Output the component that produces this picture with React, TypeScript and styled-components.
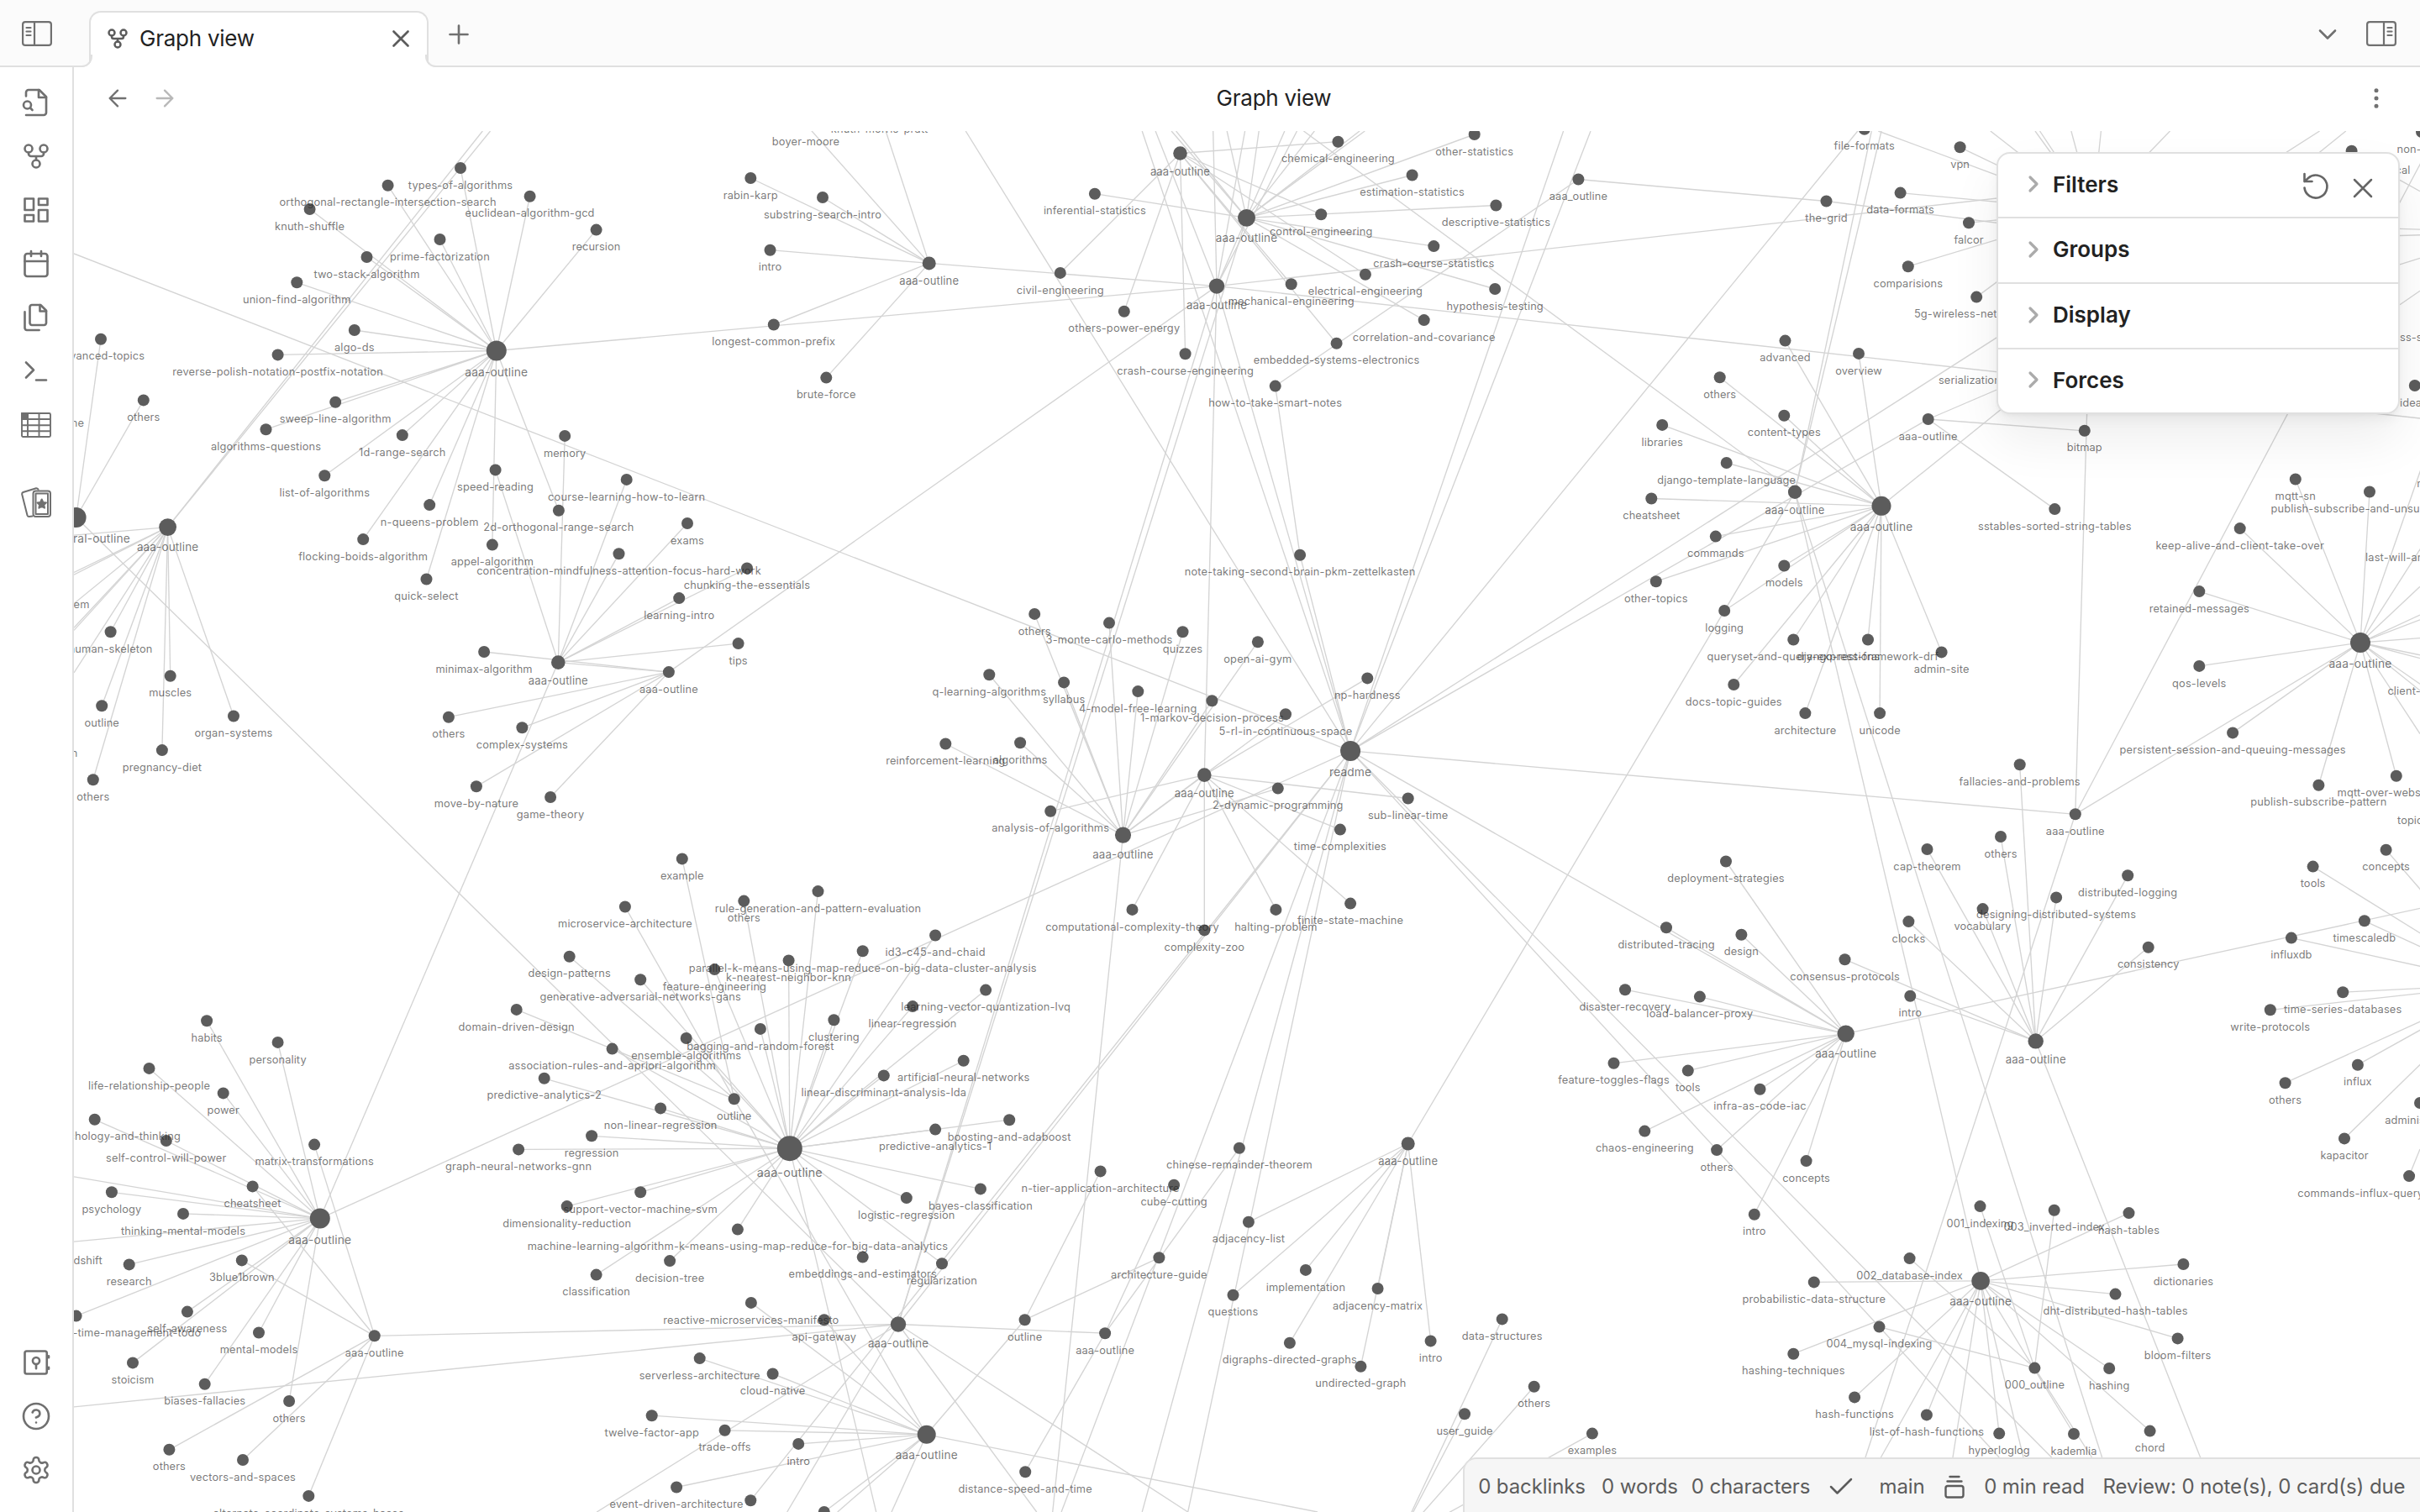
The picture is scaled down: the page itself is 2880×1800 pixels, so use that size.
import React from "react";
import styled, { createGlobalStyle } from "styled-components";

/* ------------------------------------------------------------------ */
/* Graph data                                                          */
/* ------------------------------------------------------------------ */

type Leaf = [x: number, y: number, label: string];
type Hub = { x: number; y: number; r: number; label: string };

const hubs: Record<string, Hub> = {
  algo: { x: 590.8, y: 417.5, r: 12, label: "aaa-outline" },
  learning: { x: 664.3, y: 788.6, r: 8.3, label: "aaa-outline" },
  game: { x: 795.9, y: 800.1, r: 7, label: "aaa-outline" },
  strings: { x: 1105.7, y: 313.4, r: 8, label: "aaa-outline" },
  engineering: { x: 1404.5, y: 182.5, r: 8.3, label: "aaa-outline" },
  stats: { x: 1483.5, y: 259.4, r: 10.4, label: "aaa-outline" },
  science: { x: 1448, y: 340.6, r: 9.2, label: "aaa-outline" },
  notes: { x: 1878.4, y: 213.5, r: 7, label: "aaa_outline" },
  net: { x: 2490.6, y: 251, r: 12, label: "" },
  formats: { x: 2294.7, y: 499, r: 7, label: "aaa-outline" },
  django: { x: 2239, y: 602.3, r: 11.5, label: "aaa-outline" },
  backend: { x: 2136.1, y: 585.8, r: 8.2, label: "aaa-outline" },
  mqtt: { x: 2809, y: 765, r: 12, label: "aaa-outline" },
  storage: { x: 2469.8, y: 969.3, r: 7, label: "aaa-outline" },
  series: { x: 2978, y: 1171.7, r: 10, label: "" },
  distributed: { x: 2422.7, y: 1239.4, r: 9.2, label: "aaa-outline" },
  devops: { x: 2196.7, y: 1230.6, r: 10.2, label: "aaa-outline" },
  hash: { x: 2357.1, y: 1524.9, r: 10.8, label: "aaa-outline" },
  indexing: { x: 2421.4, y: 1628.6, r: 7, label: "000_outline" },
  graphs: { x: 1675.7, y: 1361.5, r: 8, label: "aaa-outline" },
  puzzles: { x: 1315.1, y: 1587.2, r: 7, label: "aaa-outline" },
  arch: { x: 1219.6, y: 1571.2, r: 7, label: "outline" },
  readme: { x: 1607.1, y: 893.9, r: 12, label: "readme" },
  rl: { x: 1336.5, y: 994.1, r: 9.6, label: "aaa-outline" },
  complexity: { x: 1433.3, y: 922.6, r: 8.3, label: "aaa-outline" },
  anatomy: { x: 199.6, y: 627.6, r: 10.4, label: "aaa-outline" },
  general: { x: 90.6, y: 616, r: 12, label: "behavioural-outline" },
  psych: { x: 380.8, y: 1450.6, r: 12, label: "aaa-outline" },
  math: { x: 445.7, y: 1590.3, r: 7, label: "aaa-outline" },
  ml: { x: 939.8, y: 1367.2, r: 15, label: "aaa-outline" },
  software: { x: 873.7, y: 1308.3, r: 7, label: "outline" },
  cs: { x: 1069, y: 1576.5, r: 9.2, label: "aaa-outline" },
  micro: { x: 1102.7, y: 1707.8, r: 11, label: "aaa-outline" },
  db: { x: 1664, y: 1834, r: 9, label: "" },
};

const clusters: Record<string, Leaf[]> = {
  algo: [
    [548, 200, "types-of-algorithms"],
    [461.6, 220.8, "orthogonal-rectangle-intersection-search"],
    [368.6, 249, "knuth-shuffle"],
    [630.6, 233.8, "euclidean-algorithm-gcd"],
    [709.6, 273.6, "recursion"],
    [523.5, 285, "prime-factorization"],
    [436.5, 306, "two-stack-algorithm"],
    [353.3, 336.3, "union-find-algorithm"],
    [421.8, 393, "algo-ds"],
    [330.6, 422.4, "reverse-polish-notation-postfix-notation"],
    [399.2, 478.7, "sweep-line-algorithm"],
    [316.5, 511.2, "algorithms-questions"],
    [478.8, 518.1, "1d-range-search"],
    [386.3, 566.3, "list-of-algorithms"],
    [511.2, 601.1, "n-queens-problem"],
    [432.2, 642.1, "flocking-boids-algorithm"],
    [585.9, 648.6, "appel-algorithm"],
    [664.9, 607.7, "2d-orthogonal-range-search"],
    [507.5, 689.5, "quick-select"],
  ],
  learning: [
    [589.6, 559.4, "speed-reading"],
    [672.2, 518.9, "memory"],
    [745.7, 570.9, "course-learning-how-to-learn"],
    [736.5, 659.3, "concentration-mindfulness-attention-focus-hard-work"],
    [818, 623, "exams"],
    [889, 676.5, "chunking-the-essentials"],
    [808.2, 712.1, "learning-intro"],
    [878.6, 766.1, "tips"],
  ],
  game: [
    [576.1, 776, "minimax-algorithm"],
    [533.9, 853.7, "others"],
    [621.4, 866.3, "complex-systems"],
    [566.9, 936.3, "move-by-nature"],
    [655.1, 949, "game-theory"],
  ],
  strings: [
    [893.3, 212, "rabin-karp"],
    [916.5, 297.7, "intro"],
    [920.8, 386.5, "longest-common-prefix"],
    [979, 235, "substring-search-intro"],
    [983.3, 449.6, "brute-force"],
    [959, 148, "boyer-moore"],
    [1046.6, 133, "knuth-morris-pratt"],
  ],
  engineering: [
    [1592.4, 168.7, "chemical-engineering"],
    [1261.8, 324.9, "civil-engineering"],
    [1337.8, 370.8, "others-power-energy"],
    [1410.6, 421.3, "crash-course-engineering"],
    [1572.2, 255.2, "control-engineering"],
    [1624.9, 326.8, "electrical-engineering"],
    [1536.7, 338.3, "mechanical-engineering"],
    [1590.6, 408.7, "embedded-systems-electronics"],
  ],
  stats: [
    [1302.9, 230.7, "inferential-statistics"],
    [1680.6, 208.5, "estimation-statistics"],
    [1754.7, 160, "other-statistics"],
    [1780.4, 244.5, "descriptive-statistics"],
    [1706.3, 293.1, "crash-course-statistics"],
    [1779.2, 344, "hypothesis-testing"],
    [1694.7, 381.1, "correlation-and-covariance"],
  ],
  notes: [
    [1517.7, 459.6, "how-to-take-smart-notes"],
    [2173.5, 239.5, "the-grid"],
  ],
  net: [
    [2332.6, 175.3, "vpn"],
    [2261.6, 229.6, "data-formats"],
    [2343, 265.2, "falcor"],
    [2270.8, 317.2, "comparisions"],
    [2352.2, 353.6, "5g-wireless-networking"],
  ],
  formats: [
    [2480.8, 512.8, "bitmap"],
    [2445.3, 606.1, "sstables-sorted-string-tables"],
  ],
  django: [
    [2124.5, 405.6, "advanced"],
    [2212, 420.9, "overview"],
    [2046.7, 449.2, "others"],
    [2123.3, 494.8, "content-types"],
    [1978.2, 505.9, "libraries"],
    [2054.7, 551, "django-template-language"],
    [1965.3, 593.5, "cheatsheet"],
    [2041.8, 638.6, "commands"],
    [1970.8, 692.2, "other-topics"],
    [2123.3, 673.5, "models"],
    [2052.2, 727, "logging"],
    [2134.3, 761.5, "queryset-and-query-expressions"],
    [2223, 761.5, "django-rest-framework-drf"],
    [2310.6, 776.4, "admin-site"],
    [2063.3, 815, "docs-topic-guides"],
    [2148.4, 849.1, "architecture"],
    [2237.1, 849.1, "unicode"],
  ],
  mqtt: [
    [2665.7, 629.1, "keep-alive-and-client-take-over"],
    [2617.3, 704.1, "retained-messages"],
    [2617.3, 792.9, "qos-levels"],
    [2657.1, 872.4, "persistent-session-and-queuing-messages"],
    [2759.4, 934.8, "publish-subscribe-pattern"],
    [2851.8, 923.7, "mqtt-over-websockets"],
    [2731.8, 570.5, "mqtt-sn"],
    [2820, 585.5, "publish-subscribe-and-unsubscribing"],
  ],
  series: [
    [2839.6, 1011.7, "concepts"],
    [2752.6, 1031.6, "tools"],
    [2813.9, 1096.3, "timescaledb"],
    [2726.9, 1116.6, "influxdb"],
    [2788.2, 1181.2, "time-series-databases"],
    [2701.8, 1202.3, "write-protocols"],
    [2805.9, 1267.7, "influx"],
    [2719.6, 1289.2, "others"],
    [2790, 1355.4, "kapacitor"],
  ],
  distributed: [
    [2403.7, 910.3, "fallacies-and-problems"],
    [2293.5, 1011, "cap-theorem"],
    [2381, 996, "others"],
    [2532.2, 1042.3, "distributed-logging"],
    [2447.1, 1068.4, "designing-distributed-systems"],
    [2359.6, 1082.1, "vocabulary"],
    [2271.4, 1097.1, "clocks"],
    [2195.5, 1142.2, "consensus-protocols"],
    [2556.7, 1127.7, "consistency"],
    [2273.3, 1185.8, "intro"],
  ],
  devops: [
    [2054, 1025.5, "deployment-strategies"],
    [1983, 1104.3, "distributed-tracing"],
    [2072.4, 1112.8, "design"],
    [1934, 1178.2, "disaster-recovery"],
    [2022.9, 1186.6, "load-balancer-proxy"],
    [1920.5, 1265.8, "feature-toggles-flags"],
    [2008.8, 1274.6, "tools"],
    [2094.5, 1296.8, "infra-as-code-iac"],
    [1957.3, 1346.6, "chaos-engineering"],
    [2043.1, 1369.1, "others"],
    [2149.6, 1382.1, "concepts"],
    [2087.8, 1445.7, "intro"],
  ],
  hash: [
    [2158.8, 1526.4, "probabilistic-data-structure"],
    [2533.5, 1444.1, "hash-tables"],
    [2598.4, 1505, "dictionaries"],
    [2517.5, 1540.6, "dht-distributed-hash-tables"],
    [2591.6, 1593.4, "bloom-filters"],
    [2134.3, 1611.7, "hashing-techniques"],
    [2207.1, 1663.4, "hash-functions"],
    [2292.9, 1684.4, "list-of-hash-functions"],
    [2379.2, 1706.6, "hyperloglog"],
    [2468, 1707, "kademlia"],
    [2558.6, 1703.6, "chord"],
    [2510.2, 1629, "hashing"],
  ],
  indexing: [
    [2356.5, 1436.1, "001_indexing"],
    [2444.7, 1440.7, "003_inverted-index"],
    [2272.6, 1498.1, "002_database-index"],
    [2236.5, 1579.6, "004_mysql-indexing"],
  ],
  graphs: [
    [1485.9, 1454.8, "adjacency-list"],
    [1467.5, 1541.7, "questions"],
    [1553.9, 1511.9, "implementation"],
    [1639.6, 1534, "adjacency-matrix"],
    [1534.9, 1598.7, "digraphs-directed-graphs"],
    [1619.4, 1626.7, "undirected-graph"],
    [1702.6, 1596.4, "intro"],
  ],
  puzzles: [
    [1474.9, 1366.8, "chinese-remainder-theorem"],
    [1397.1, 1410.8, "cube-cutting"],
    [1220.2, 1752.2, "distance-speed-and-time"],
  ],
  arch: [
    [1309.6, 1394.4, "n-tier-application-architecture"],
    [1379.4, 1497.3, "architecture-guide"],
  ],
  db: [
    [1787.7, 1570.4, "data-structures"],
    [1825.7, 1650.8, "others"],
    [1743, 1683.3, "user_guide"],
    [1894.9, 1706.6, "examples"],
  ],
  readme: [
    [1547.1, 660.8, "note-taking-second-brain-pkm-zettelkasten"],
    [893.3, 1786.2, ""],
  ],
  rl: [
    [1231.2, 730.9, "others"],
    [1320, 741.6, "3-monte-carlo-methods"],
    [1407.5, 752.3, "quizzes"],
    [1496.9, 764.2, "open-ai-gym"],
    [1177.3, 803.2, "q-learning-algorithms"],
    [1266.1, 812.4, "syllabus"],
    [1354.3, 823.1, "4-model-free-learning"],
    [1442.4, 834.2, "1-markov-decision-process"],
    [1530, 850.3, "5-rl-in-continuous-space"],
    [1125.3, 885.5, "reinforcement-learning"],
    [1214.1, 884.3, "algorithms"],
    [1520.8, 938.6, "2-dynamic-programming"],
  ],
  complexity: [
    [1627.3, 807.4, "np-hardness"],
    [1675.7, 950.5, "sub-linear-time"],
    [1594.9, 987.6, "time-complexities"],
    [1250.2, 965.8, "analysis-of-algorithms"],
    [1347.5, 1082.9, "computational-complexity-theory"],
    [1433.3, 1107.4, "complexity-zoo"],
    [1518.4, 1082.9, "halting-problem"],
    [1607.1, 1075.6, "finite-state-machine"],
  ],
  general: [
    [120, 403.7, "advanced-topics"],
    [170.8, 476.4, "others"],
  ],
  anatomy: [
    [131.6, 752.3, "human-skeleton"],
    [202.7, 804.7, "muscles"],
    [121.2, 840.3, "outline"],
    [278, 852.5, "organ-systems"],
    [192.9, 893.1, "pregnancy-diet"],
    [110.8, 928.3, "others"],
  ],
  psych: [
    [246.1, 1215.3, "habits"],
    [330.6, 1240.9, "personality"],
    [177.5, 1271.9, "life-relationship-people"],
    [265.7, 1301.4, "power"],
    [112.7, 1332.8, ""],
    [197.8, 1358, "self-control-will-power"],
    [132.9, 1419.3, "psychology"],
    [218, 1444.9, "thinking-mental-models"],
    [153.7, 1505.4, "research"],
    [222.9, 1561.6, "self-awareness"],
    [90.6, 1566.6, ""],
    [308, 1586.5, "mental-models"],
    [158, 1622.4, "stoicism"],
    [243.7, 1647.7, "biases-fallacies"],
    [344.1, 1668, "others"],
  ],
  math: [
    [374.1, 1362.6, "matrix-transformations"],
    [300.6, 1412.4, "cheatsheet"],
    [287.8, 1500.4, "3blue1brown"],
    [201.4, 1725.8, "others"],
    [289, 1738, "vectors-and-spaces"],
    [367.3, 1780.9, "alternate-coordinate-systems-bases"],
  ],
  software: [
    [811.8, 1022.4, "example"],
    [743.9, 1079.5, "microservice-architecture"],
    [677.7, 1138.8, "design-patterns"],
    [614.7, 1201.9, "domain-driven-design"],
  ],
  ml: [
    [885.3, 1072.6, "others"],
    [762.2, 1166.3, "generative-adversarial-networks-gans"],
    [850.4, 1154.1, "feature-engineering"],
    [938.6, 1143.4, "k-nearest-neighbor-knn"],
    [973.5, 1061.1, "rule-generation-and-pattern-evaluation"],
    [1113.1, 1113.5, "id3-c45-and-chaid"],
    [1026.7, 1132.3, "parallel-k-means-using-map-reduce-on-big-data-cluster-analysis"],
    [1173.1, 1178.6, "learning-vector-quantization-lvq"],
    [1086.1, 1198.1, "linear-regression"],
    [992.4, 1214.2, "clustering"],
    [904.9, 1224.9, "bagging-and-random-forest"],
    [816.7, 1236, "ensemble-algorithms"],
    [728.6, 1248.6, "association-rules-and-apriori-algorithm"],
    [647.7, 1283.8, "predictive-analytics-2"],
    [786.1, 1319.4, "non-linear-regression"],
    [704.1, 1352.3, "regression"],
    [617.1, 1368.4, "graph-neural-networks-gnn"],
    [762.2, 1419.3, "support-vector-machine-svm"],
    [674.7, 1436.1, "dimensionality-reduction"],
    [877.9, 1463.6, "machine-learning-algorithm-k-means-using-map-reduce-for-big-data-analytics"],
    [797.1, 1501.1, "decision-tree"],
    [709.6, 1517.6, "classification"],
    [1146.7, 1262.8, "artificial-neural-networks"],
    [1051.8, 1280.4, "linear-discriminant-analysis-lda"],
    [1113.1, 1344.6, "predictive-analytics-1"],
    [1201.2, 1333.2, "boosting-and-adaboost"],
    [1166.9, 1415.4, "bayes-classification"],
    [1078.8, 1426.1, "logistic-regression"],
    [1026.7, 1496.6, "embeddings-and-estimators"],
    [1121, 1504.2, "regularization"],
  ],
  micro: [
    [893.9, 1550.9, "reactive-microservices-manifesto"],
    [980.8, 1571.2, "api-gateway"],
    [832.7, 1617.1, "serverless-architecture"],
    [919.6, 1635.5, "cloud-native"],
    [775.7, 1685.2, "twelve-factor-app"],
    [862.6, 1702.8, "trade-offs"],
    [950.2, 1718.9, "intro"],
    [805.1, 1770.5, "event-driven-architecture"],
    [980.8, 1800, ""],
  ],
};

/* Nodes whose parent lies outside of the visible canvas. */
const strays: Leaf[] = [
  [2218.8, 153.8, "file-formats"],
  [2798.6, 179.8, ""],
  [2873.8, 459, ""],
  [2867.1, 1400.1, ""],
  [2880, 1313, ""],
  [2882, 157, ""],
];

const hubLinks: [string, string][] = [
  ["game", "science"],
  ["game", "learning"],
  ["strings", "science"],
  ["algo", "science"],
  ["learning", "psych"],
  ["stats", "science"],
  ["readme", "science"],
  ["readme", "formats"],
  ["readme", "storage"],
  ["readme", "devops"],
  ["readme", "psych"],
  ["readme", "cs"],
  ["storage", "net"],
  ["storage", "mqtt"],
  ["backend", "hash"],
  ["backend", "graphs"],
  ["complexity", "science"],
  ["complexity", "rl"],
  ["cs", "science"],
  ["cs", "stats"],
  ["cs", "general"],
  ["cs", "math"],
  ["cs", "puzzles"],
  ["software", "micro"],
  ["arch", "micro"],
];

/* Links that run from a hub to the edge of the canvas. */
const rays: Record<string, [number, number][]> = {
  readme: [
    [1359.2, 156], [1149.2, 156], [1860.6, 156], [1893, 156], [2210.8, 156], [2760.6, 156],
    [88, 302], [1263.1, 1800], [1359.2, 1800], [1413.7, 1800], [2379.2, 1735], [2441.6, 1735],
  ],
  science: [[1375.1, 156], [1443.7, 156], [1481.6, 156], [1543.5, 156], [2880, 498], [2593.5, 211.6]],
  stats: [
    [1394.1, 156], [1399.6, 156], [1460.2, 156], [1498.2, 156], [1528.8, 156], [1564.3, 156],
    [1618.1, 156], [1624.3, 156],
  ],
  backend: [[1551.4, 156], [2227.3, 156], [2239, 156], [2501.6, 1735]],
  net: [
    [2235.3, 156], [2368.8, 156], [2422, 156], [2427.5, 156], [2464.9, 156], [2500.4, 156], [2582.5, 156],
  ],
  django: [[2791.8, 156]],
  storage: [[2901, 156], [2220, 1735]],
  formats: [[2500, 411]],
  mqtt: [
    [2880, 698.3], [2880, 732], [2880, 737.8], [2880, 759.6], [2880, 779.8], [2880, 783.7],
    [2880, 814.3], [2880, 822], [2880, 873.6], [2883, 553], [2887, 643],
  ],
  devops: [[2880, 1081.4]],
  distributed: [[2618.6, 1735]],
  hash: [[2238.4, 1735], [2324, 1735], [2408, 1735]],
  indexing: [[2489.4, 1735]],
  anatomy: [
    [88, 637.1], [88, 681.5], [88, 684.2], [88, 718.6], [88, 747.3], [88, 750.4], [88, 800.9],
    [574.3, 156], [583.5, 156],
  ],
  psych: [[88, 1400.9], [88, 1478.2]],
  cs: [[88, 1674.9], [1413.7, 1800], [1233.7, 1800], [710.2, 1800], [936.7, 1800]],
  ml: [[1042.7, 1800]],
  rl: [[1252.7, 1800]],
  micro: [[1568, 1800], [1061, 1800], [996.7, 1800]],
};

const segments: [number, number, number, number][] = [
  [1517.7, 459.6, 1547.1, 660.8],
  [2173.5, 239.5, 2500, 281],
  [2856, 272.4, 2880, 273.2],
  [2856, 280.5, 2880, 279.7],
  [2856, 314.9, 2880, 307.3],
  [2856, 362.8, 2880, 346.3],
  [2856, 214.3, 2880, 227.7],
  [2867, 1400, 2880, 1368],
];

/* Labels that are cut by the canvas border or by the controls. */
const cutLabels: [x: number, y: number, anchor: "start" | "end", label: string][] = [
  [100, 503.6, "end", "outline"],
  [106.5, 720.2, "end", "nervous-system"],
  [92.5, 896.6, "end", "brain"],
  [215, 1353.3, "end", "others-psychology-and-thinking"],
  [121.8, 1500.8, "end", "mindshift"],
  [239.4, 1587.2, "end", "productivity-personal-time-management-todo"],
  [2307, 453, "start", "serialization"],
  [2868.5, 202.8, "end", "cal"],
  [2852.5, 177.9, "start", "non-relational"],
  [2819, 401.8, "start", "wireless-security"],
  [2856, 479.9, "start", "ideas"],
  [2876.3, 575.9, "start", "request-response"],
  [2815, 663.5, "start", "last-will-and-testament"],
  [2841.4, 822.7, "start", "client-broker"],
  [2853, 976.9, "start", "topics"],
  [2838.3, 1333.5, "start", "administration"],
  [2734.3, 1420.8, "start", "commands-influx-query-language"],
];

/* ------------------------------------------------------------------ */
/* Styles                                                              */
/* ------------------------------------------------------------------ */

const FONT = `Inter, "Liberation Sans", sans-serif`;
const LINE = "#e0e0e0";
const MUTED = "#707070";

const GlobalStyle = createGlobalStyle`
  * { box-sizing: border-box; }
  body { margin: 0; background: #fff; font-family: ${FONT}; overflow: hidden; }
`;

const Shell = styled.div`
  width: 2880px;
  height: 1800px;
  display: flex;
  flex-direction: column;
  background: #fff;
  color: #222;
`;

const TitleBar = styled.header`
  height: 80px;
  flex: none;
  display: flex;
  align-items: flex-start;
  background: #fbfbfb;
  box-shadow: inset 0 -2px 0 ${LINE};
`;

const Slot = styled.div<{ $w: number; $h: number; $color?: string }>`
  width: ${(p) => p.$w}px;
  height: ${(p) => p.$h}px;
  flex: none;
  display: flex;
  align-items: center;
  justify-content: center;
  color: ${(p) => p.$color ?? MUTED};
`;

const Tab = styled.div`
  position: relative;
  width: 404px;
  height: 67px;
  margin: 13px 0 0 18px;
  padding: 0 14px 4px 18px;
  display: flex;
  align-items: center;
  gap: 12px;
  background: #fff;
  border: 2px solid ${LINE};
  border-bottom: 0;
  border-radius: 14px 14px 0 0;
  color: #5c5c5c;
  &::before,
  &::after {
    content: "";
    position: absolute;
    bottom: 0;
    width: 13px;
    height: 13px;
    border-bottom: 2px solid ${LINE};
    clip-path: inset(0);
  }
  &::before {
    left: -13px;
    border-right: 2px solid ${LINE};
    border-bottom-right-radius: 13px;
    box-shadow: 5px 5px 0 2px #fff;
  }
  &::after {
    right: -13px;
    border-left: 2px solid ${LINE};
    border-bottom-left-radius: 13px;
    box-shadow: -5px 5px 0 2px #fff;
  }
`;

const TabTitle = styled.span`
  flex: 1;
  margin-bottom: 1px;
  font-size: 26px;
  letter-spacing: -0.25px;
  color: #222;
`;

const Spacer = styled.div`
  flex: 1;
`;

const Body = styled.div`
  flex: 1;
  min-height: 0;
  display: flex;
`;

const Ribbon = styled.nav`
  width: 88px;
  flex: none;
  display: flex;
  flex-direction: column;
  padding: 10px 0 18px;
  border-right: 2px solid ${LINE};
  color: ${MUTED};
`;

const RibbonItem = styled.div<{ $gap?: number }>`
  height: 64px;
  margin-top: ${(p) => p.$gap ?? 0}px;
  display: flex;
  align-items: center;
  justify-content: center;
`;

const Leafpane = styled.main`
  position: relative;
  flex: 1;
  min-width: 0;
  display: flex;
  flex-direction: column;
`;

const ViewHeader = styled.div`
  height: 76px;
  flex: none;
  display: flex;
  align-items: center;
  padding: 0 36px 2px 36px;
`;

const NavGroup = styled.div`
  display: flex;
  gap: 24px;
  width: 88px;
`;

const ViewTitle = styled.h1`
  flex: 1;
  margin: 0 0 1px;
  text-align: center;
  font-size: 26px;
  font-weight: 400;
  letter-spacing: -0.25px;
  text-indent: 8px;
`;

const Canvas = styled.svg`
  display: block;
  flex: 1;
  width: 2792px;
  height: 1644px;
`;

const Edge = styled.line`
  stroke: #d4d4d4;
  stroke-width: 1.35;
`;

const Dot = styled.circle`
  fill: #5c5c5c;
`;

const Label = styled.text<{ $r: number; $track: number }>`
  font-family: ${FONT};
  font-size: ${(p) => 12.8 * (1 + 0.0153 * (p.$r - 7))}px;
  letter-spacing: ${(p) => p.$track}px;
  fill: rgba(34, 34, 34, 0.62);
`;

const Controls = styled.section`
  position: absolute;
  top: 101px;
  right: 24px;
  width: 480px;
  height: 312px;
  background: #fff;
  border: 2px solid ${LINE};
  border-radius: 16px;
  box-shadow: 0 2px 4px rgba(0, 0, 0, 0.028), 0 7px 14px rgba(0, 0, 0, 0.042),
    0 30px 60px rgba(0, 0, 0, 0.07);
`;

const ControlRow = styled.div`
  height: 78px;
  display: flex;
  align-items: center;
  padding: 0 22px 3px 31px;
  border-bottom: 2px solid ${LINE};
  &:first-child {
    height: 77px;
  }
  &:last-child {
    height: 77px;
    border-bottom-color: transparent;
  }
`;

const ControlName = styled.span`
  flex: 1;
  margin-left: 12px;
  font-size: 26px;
  font-weight: 600;
`;

const ControlTools = styled.div`
  display: flex;
  gap: 18px;
  padding-top: 10px;
  color: #666;
`;

const StatusBar = styled.footer`
  position: absolute;
  right: 0;
  bottom: 0;
  width: 1139px;
  height: 65px;
  display: flex;
  align-items: center;
  justify-content: flex-end;
  padding: 2px 16px 0 0;
  background: #f6f6f6;
  border: solid ${LINE};
  border-width: 2px 0 0 2px;
  border-top-left-radius: 16px;
  color: #5c5c5c;
  font-size: 24px;
  letter-spacing: -0.1px;
`;

const StatusItem = styled.span<{ $gap: number; $w: number }>`
  width: ${(p) => p.$w}px;
  margin-right: ${(p) => p.$gap}px;
  white-space: nowrap;
  display: flex;
  justify-content: center;
`;

/* ------------------------------------------------------------------ */
/* Icons                                                               */
/* ------------------------------------------------------------------ */

const Glyph = styled.svg<{ $size: number; $stroke?: number }>`
  width: ${(p) => p.$size}px;
  height: ${(p) => p.$size}px;
  display: block;
  flex: none;
  fill: none;
  stroke: currentColor;
  stroke-width: ${(p) => p.$stroke ?? 1.75};
  stroke-linecap: round;
  stroke-linejoin: round;
`;

type IconProps = { size?: number; stroke?: number };

const icon =
  (content: React.ReactNode) =>
  ({ size = 36, stroke }: IconProps) => (
    <Glyph viewBox="0 0 24 24" $size={size} $stroke={stroke}>
      {content}
    </Glyph>
  );

const IconFork = icon(
  <>
    <circle cx="12" cy="18" r="3" />
    <circle cx="6" cy="6" r="3" />
    <circle cx="18" cy="6" r="3" />
    <path d="M18 9v1a2 2 0 0 1-2 2H8a2 2 0 0 1-2-2V9M12 12v3" />
  </>
);
const IconFileSearch = icon(
  <>
    <path d="M4 22h14a2 2 0 0 0 2-2V7.5L14.5 2H6a2 2 0 0 0-2 2v3" />
    <path d="M14 2v6h6" />
    <circle cx="5" cy="14" r="3" />
    <path d="m9 18-1.5-1.5" />
  </>
);
const IconDashboard = icon(
  <>
    <rect x="3" y="3" width="7" height="9" />
    <rect x="14" y="3" width="7" height="5" />
    <rect x="14" y="12" width="7" height="9" />
    <rect x="3" y="16" width="7" height="5" />
  </>
);
const IconCalendar = icon(
  <>
    <rect x="3" y="4" width="18" height="18" rx="2" />
    <path d="M16 2v4M8 2v4M3 10h18" />
  </>
);
const IconFiles = icon(
  <>
    <path d="M15.5 2H8.6c-.4 0-.8.2-1.1.5-.3.3-.5.7-.5 1.1v12.8c0 .4.2.8.5 1.1.3.3.7.5 1.1.5h9.8c.4 0 .8-.2 1.1-.5.3-.3.5-.7.5-1.1V6.5L15.5 2z" />
    <path d="M3 7.6v12.8c0 .4.2.8.5 1.1.3.3.7.5 1.1.5h9.8M15 2v5h5" />
  </>
);
const IconTerminal = icon(<path d="m4 17 6-6-6-6M12 19h8" />);
const IconHelp = icon(
  <>
    <circle cx="12" cy="12" r="10" />
    <path d="M9.09 9a3 3 0 0 1 5.83 1c0 2-3 3-3 3M12 17h.01" />
  </>
);
const IconGear = icon(
  <>
    <path d="M12.22 2h-.44a2 2 0 0 0-2 2v.18a2 2 0 0 1-1 1.73l-.43.25a2 2 0 0 1-2 0l-.15-.08a2 2 0 0 0-2.73.73l-.22.38a2 2 0 0 0 .73 2.73l.15.1a2 2 0 0 1 1 1.72v.51a2 2 0 0 1-1 1.74l-.15.09a2 2 0 0 0-.73 2.73l.22.38a2 2 0 0 0 2.73.73l.15-.08a2 2 0 0 1 2 0l.43.25a2 2 0 0 1 1 1.73V20a2 2 0 0 0 2 2h.44a2 2 0 0 0 2-2v-.18a2 2 0 0 1 1-1.73l.43-.25a2 2 0 0 1 2 0l.15.08a2 2 0 0 0 2.73-.73l.22-.39a2 2 0 0 0-.73-2.73l-.15-.08a2 2 0 0 1-1-1.74v-.5a2 2 0 0 1 1-1.74l.15-.09a2 2 0 0 0 .73-2.73l-.22-.38a2 2 0 0 0-2.73-.73l-.15.08a2 2 0 0 1-2 0l-.43-.25a2 2 0 0 1-1-1.73V4a2 2 0 0 0-2-2z" />
    <circle cx="12" cy="12" r="3" />
  </>
);
const IconVault = icon(
  <>
    <rect x="3" y="3" width="17.5" height="18" rx="1.5" />
    <circle cx="12" cy="10.7" r="2.7" />
    <path d="M12 13.4v3.4M22 6.8v1.4M22 15.8v1.4" />
  </>
);
const IconX = icon(<path d="M18 6 6 18M6 6l12 12" />);
const IconPlus = icon(<path d="M12 5v14M5 12h14" />);
const IconLeft = icon(<path d="M19 12H5M12 19l-7-7 7-7" />);
const IconRight = icon(<path d="M5 12h14M12 5l7 7-7 7" />);
const IconDown = icon(<path d="m6 9 6 6 6-6" />);
const IconChevron = icon(<path d="m9 18 6-6-6-6" />);
const IconMore = icon(
  <>
    <circle cx="12" cy="12" r="1" />
    <circle cx="12" cy="5" r="1" />
    <circle cx="12" cy="19" r="1" />
  </>
);
const IconReset = icon(<path d="M3 2v6h6M3 13a9 9 0 1 0 3-7.7L3 8" />);
const IconCheck = icon(<path d="M20 6 9 17l-5-5" />);

const SidebarGlyph = ({ flip }: { flip?: boolean }) => (
  <svg
    width="36"
    height="30"
    viewBox="0 0 36 30"
    fill="none"
    stroke="currentColor"
    strokeWidth="2.2"
    strokeLinecap="round"
    transform={flip ? "scale(-1 1)" : undefined}
  >
    <rect x="1.1" y="1.1" width="33.8" height="27.8" rx="3" />
    <path d="M15 1v28M5.5 8h5M5.5 12.5h5M5.5 17h5" />
  </svg>
);

const TableGlyph = () => (
  <svg width="36" height="30" viewBox="0 0 36 30" fill="none" stroke="currentColor" strokeWidth="1.9">
    <rect x="1" y="1" width="34" height="28" rx="1.5" />
    <path d="M8 1v28M21.5 1v28M1 8h34M1 15.3h34M1 22.3h34" />
    <rect x="1" y="1" width="7" height="7" fill="currentColor" />
  </svg>
);

const CardsGlyph = () => (
  <svg width="36" height="36" viewBox="0 0 36 36" fill="none" stroke="currentColor" strokeWidth="2" strokeLinejoin="round">
    <path d="M14 34.5 9.5 35Q8 35 7.5 33.5L1.2 8.5Q1 6.5 2.5 6L18 1.3Q20 1 21 3.5" />
    <rect x="14.5" y="4.5" width="20.5" height="30.5" rx="3" />
    <rect x="17.5" y="7.5" width="14.5" height="24.5" />
    <path
      d="m24.7 14.5 1.6 3.4 3.7.5-2.7 2.6.7 3.7-3.3-1.8-3.3 1.8.7-3.7-2.7-2.6 3.7-.5z"
      fill="currentColor"
    />
  </svg>
);

const StackGlyph = () => (
  <svg width="24" height="28" viewBox="0 0 24 28" fill="none" stroke="currentColor" strokeWidth="2.4" strokeLinecap="round">
    <rect x="1.5" y="13" width="21" height="13.5" rx="2.5" />
    <path d="M3.5 7.5h17M6.5 2h11" />
  </svg>
);

/* ------------------------------------------------------------------ */
/* Parts                                                               */
/* ------------------------------------------------------------------ */

/* Dashes get a little more air than letters. */
const tracking = (text: string) => 0.1 + (0.7 * (text.split("-").length - 1)) / text.length;

const NodeLabel = ({ x, y, r, text }: { x: number; y: number; r: number; text: string }) => (
  <Label $r={r} $track={tracking(text)} x={x} y={y + 24.6 + (r - 7) * 1.1} textAnchor="middle">
    {text}
  </Label>
);

function Graph() {
  const leaves = [...Object.values(clusters).flat(), ...strays];
  return (
    <Canvas viewBox="88 156 2792 1644">
      <g>
        {Object.entries(clusters).map(([key, list]) =>
          list.map(([x, y], i) => <Edge key={key + i} x1={hubs[key].x} y1={hubs[key].y} x2={x} y2={y} />)
        )}
        {hubLinks.map(([a, b]) => (
          <Edge key={a + b} x1={hubs[a].x} y1={hubs[a].y} x2={hubs[b].x} y2={hubs[b].y} />
        ))}
        {Object.entries(rays).map(([key, list]) =>
          list.map(([x, y], i) => <Edge key={key + i} x1={hubs[key].x} y1={hubs[key].y} x2={x} y2={y} />)
        )}
        {segments.map(([x1, y1, x2, y2], i) => (
          <Edge key={i} x1={x1} y1={y1} x2={x2} y2={y2} />
        ))}
      </g>
      <g>
        {leaves.map(([x, y], i) => (
          <Dot key={i} cx={x} cy={y} r={7} />
        ))}
        {Object.entries(hubs).map(([key, h]) => (
          <Dot key={key} cx={h.x} cy={h.y} r={h.r} />
        ))}
      </g>
      <g>
        {leaves.map(([x, y, text], i) => text && <NodeLabel key={i} x={x} y={y} r={7} text={text} />)}
        {Object.entries(hubs).map(
          ([key, h]) => h.label && <NodeLabel key={key} x={h.x} y={h.y} r={h.r} text={h.label} />
        )}
        {cutLabels.map(([x, y, anchor, text]) => (
          <Label key={text} $r={7} $track={tracking(text)} x={x} y={y + 4} textAnchor={anchor}>
            {text}
          </Label>
        ))}
      </g>
    </Canvas>
  );
}

export default function App() {
  return (
    <>
      <GlobalStyle />
      <Shell>
        <TitleBar>
          <Slot $w={88} $h={80}>
            <SidebarGlyph />
          </Slot>
          <Tab>
            <IconFork size={28} stroke={2.1} />
            <TabTitle>Graph view</TabTitle>
            <IconX size={34} stroke={1.9} />
          </Tab>
          <Slot $w={72} $h={82}>
            <IconPlus size={36} />
          </Slot>
          <Spacer />
          <Slot $w={36} $h={81}>
            <IconDown size={36} />
          </Slot>
          <Slot $w={92} $h={80}>
            <SidebarGlyph flip />
          </Slot>
        </TitleBar>
        <Body>
          <Ribbon>
            <RibbonItem><IconFileSearch /></RibbonItem>
            <RibbonItem><IconFork /></RibbonItem>
            <RibbonItem><IconDashboard /></RibbonItem>
            <RibbonItem><IconCalendar /></RibbonItem>
            <RibbonItem><IconFiles /></RibbonItem>
            <RibbonItem><IconTerminal /></RibbonItem>
            <RibbonItem><TableGlyph /></RibbonItem>
            <RibbonItem $gap={28}><CardsGlyph /></RibbonItem>
            <Spacer />
            <RibbonItem><IconVault /></RibbonItem>
            <RibbonItem><IconHelp /></RibbonItem>
            <RibbonItem><IconGear /></RibbonItem>
          </Ribbon>
          <Leafpane>
            <ViewHeader>
              <NavGroup>
                <Slot $w={32} $h={32}><IconLeft size={32} /></Slot>
                <Slot $w={32} $h={32} $color="#b8b8b8"><IconRight size={32} /></Slot>
              </NavGroup>
              <ViewTitle>Graph view</ViewTitle>
              <Slot $w={32} $h={32}><IconMore size={32} /></Slot>
            </ViewHeader>
            <Graph />
            <Controls>
              {["Filters", "Groups", "Display", "Forces"].map((name, i) => (
                <ControlRow key={name}>
                  <Slot $w={22} $h={32} $color="#ababab"><IconChevron size={32} stroke={2.4} /></Slot>
                  <ControlName>{name}</ControlName>
                  {i === 0 && (
                    <ControlTools>
                      <IconReset size={36} />
                      <IconX size={40} stroke={1.5} />
                    </ControlTools>
                  )}
                </ControlRow>
              ))}
            </Controls>
            <StatusBar>
              <StatusItem $w={126} $gap={21}>0 backlinks</StatusItem>
              <StatusItem $w={89} $gap={17}>0 words</StatusItem>
              <StatusItem $w={141} $gap={19}>0 characters</StatusItem>
              <StatusItem $w={36} $gap={28}><IconCheck size={36} stroke={1.7} /></StatusItem>
              <StatusItem $w={53} $gap={24}>main</StatusItem>
              <StatusItem $w={24} $gap={24}><StackGlyph /></StatusItem>
              <StatusItem $w={118} $gap={21}>0 min read</StatusItem>
              <StatusItem $w={363} $gap={0}>Review: 0 note(s), 0 card(s) due</StatusItem>
            </StatusBar>
          </Leafpane>
        </Body>
      </Shell>
    </>
  );
}
